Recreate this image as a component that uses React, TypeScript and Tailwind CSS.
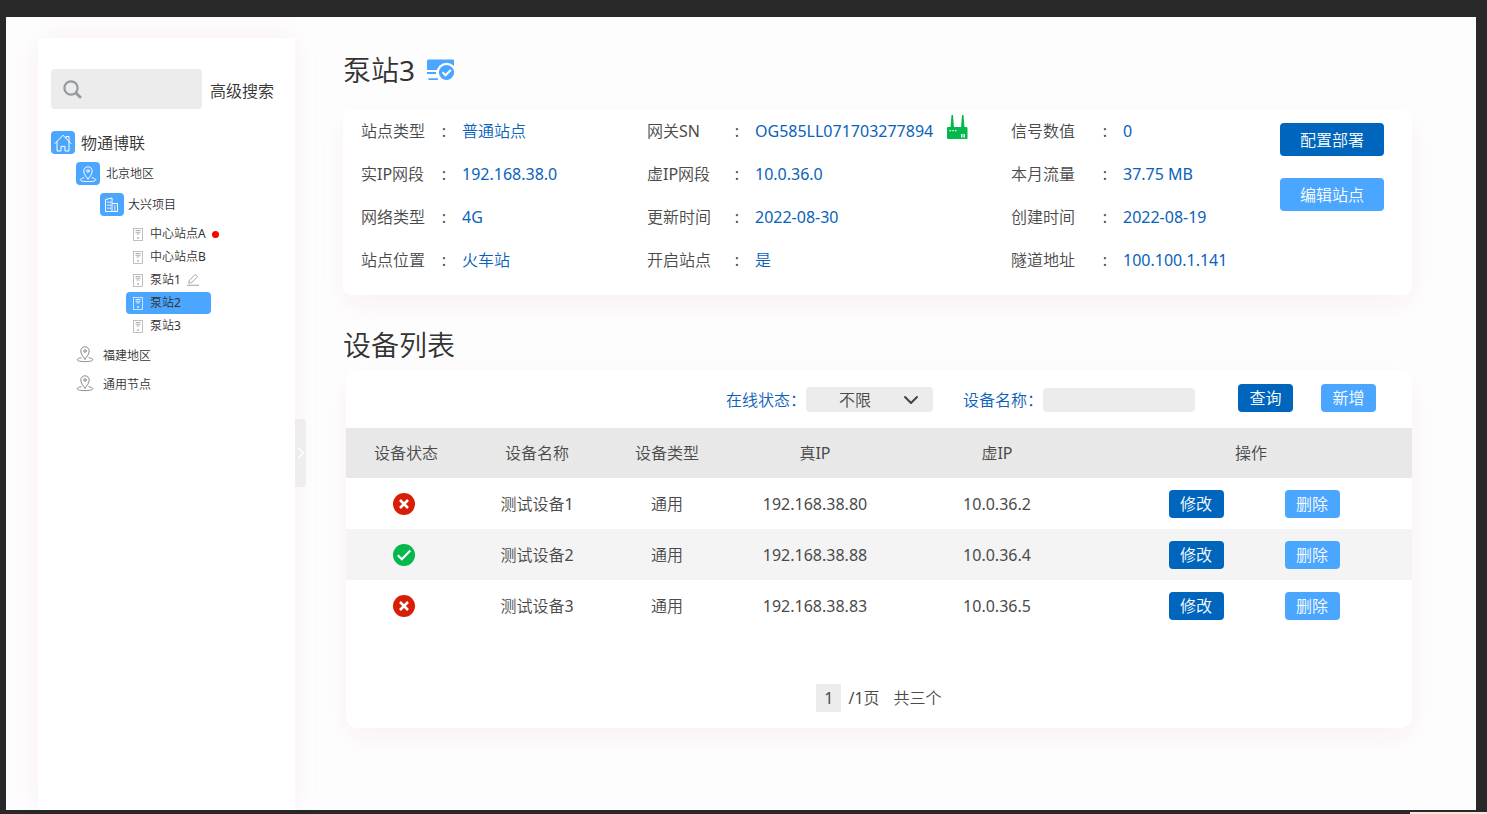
import React, { useState } from 'react';
import { ChevronDown, ChevronRight } from 'lucide-react';

interface Field {
  label: string;
  value: string;
  online?: boolean;
}

interface Device {
  id: number;
  name: string;
  type: string;
  realIp: string;
  virtualIp: string;
  online: boolean;
}

interface Station {
  name: string;
  alert?: boolean;
  editable?: boolean;
}

const siteFields: Field[][] = [
  [
    { label: '站点类型', value: '普通站点' },
    { label: '实IP网段', value: '192.168.38.0' },
    { label: '网络类型', value: '4G' },
    { label: '站点位置', value: '火车站' }
  ],
  [
    { label: '网关SN', value: 'OG585LL071703277894', online: true },
    { label: '虚IP网段', value: '10.0.36.0' },
    { label: '更新时间', value: '2022-08-30' },
    { label: '开启站点', value: '是' }
  ],
  [
    { label: '信号数值', value: '0' },
    { label: '本月流量', value: '37.75 MB' },
    { label: '创建时间', value: '2022-08-19' },
    { label: '隧道地址', value: '100.100.1.141' }
  ]
];

const labelWidths = ['w-[101px]', 'w-[108px]', 'w-[112px]'];

const devices: Device[] = [
  { id: 1, name: '测试设备1', type: '通用', realIp: '192.168.38.80', virtualIp: '10.0.36.2', online: false },
  { id: 2, name: '测试设备2', type: '通用', realIp: '192.168.38.88', virtualIp: '10.0.36.4', online: true },
  { id: 3, name: '测试设备3', type: '通用', realIp: '192.168.38.83', virtualIp: '10.0.36.5', online: false }
];

const stations: Station[] = [
  { name: '中心站点A', alert: true },
  { name: '中心站点B' },
  { name: '泵站1', editable: true },
  { name: '泵站2' },
  { name: '泵站3' }
];

const SearchIcon = () => (
  <svg width="19" height="19" viewBox="0 0 19 19" fill="none" stroke="#949a9f" strokeLinecap="round">
    <circle cx="8" cy="8" r="6.6" strokeWidth="2.2" />
    <path d="M13 13l4 4" strokeWidth="3" />
  </svg>
);

const HomeIcon = () => (
  <svg width="18" height="18" viewBox="0 0 18 18" fill="none" stroke="white" strokeWidth="1" strokeLinejoin="round" strokeLinecap="round">
    <path d="M1 9.5L9 1.2l8 8.3" />
    <path d="M3 8v9h4v-4.6h4V17h4V8" />
    <path d="M12 4.2V2.5h3v4.8" />
  </svg>
);

const PinIcon = ({ color }: { color: string }) => (
  <svg width="18" height="18" viewBox="0 0 18 18" fill="none" stroke={color} strokeWidth="1" strokeLinecap="round">
    <path d="M9 14C6.8 11.4 4.8 8.8 4.8 6a4.2 4.2 0 0 1 8.4 0c0 2.8-2 5.4-4.2 8z" />
    <circle cx="9" cy="6" r="1.3" />
    <path d="M5 12.8c-2 .3-3.8 1-3.8 1.9 0 1.3 3.5 1.9 7.8 1.9s7.8-.6 7.8-1.9c0-.9-1.8-1.6-3.8-1.9" />
  </svg>
);

const BuildingIcon = () => (
  <svg width="16" height="16" viewBox="0 0 16 16" fill="none" stroke="white" strokeWidth="1">
    <path d="M1.5 14.5V2.5l6.5-1.5v13.5zM8 6.5h5.5v8H8" />
    <path d="M4 4.5V6M6.2 4.5V6M4 7.5V9M6.2 7.5V9M4 10.5V12M6.2 10.5V12" strokeWidth="1.2" />
    <path d="M10.8 8.5v1M10.8 10.5v1M10.8 12.5v1" strokeWidth="1.5" />
  </svg>
);

const ServerIcon = ({ color }: { color: string }) => (
  <svg width="10" height="13" viewBox="0 0 10 13" fill="none" stroke={color}>
    <rect x="0.5" y="0.5" width="9" height="12" strokeWidth="0.8" />
    <path d="M2.5 2.5h5M2.5 4.3h5M3.5 6h3" strokeWidth="1" />
    <path d="M5 9v2" strokeWidth="1.4" />
  </svg>
);

const PencilIcon = () => (
  <svg width="12" height="12" viewBox="0 0 12 12" fill="none" stroke="#999" strokeWidth="0.9" strokeLinejoin="round">
    <path d="M1.8 9.2l.6-2.9L7.8 1a.9.9 0 0 1 1.3 0l1 1a.9.9 0 0 1 0 1.3L4.7 8.6zM0 11.3h12" />
  </svg>
);

const SiteBadgeIcon = () => (
  <svg width="28" height="22" viewBox="0 0 28 22" fill="none">
    <path d="M1.5 0.5H26a1 1 0 0 1 1 1V11H0V2a1.5 1.5 0 0 1 1.5-1.5z" fill="#4ba6ff" />
    <path d="M0 14h9M1.5 20.2h9.5" stroke="#4ba6ff" strokeWidth="1.8" />
    <circle cx="19.5" cy="13.5" r="9.8" fill="white" />
    <circle cx="19.5" cy="13.5" r="7.6" fill="#4ba6ff" />
    <path d="M15.5 13.3l3 3 5.3-5.3" stroke="white" strokeWidth="2" />
  </svg>
);

const RouterIcon = () => (
  <svg width="21" height="24" viewBox="0 0 21 24" fill="#04b84c">
    <path d="M4.5 0H6l1 12.5H3.5zM15 0h1.5l1 12.5H14z" />
    <rect x="0" y="12" width="20.5" height="12" rx="1" />
    <path d="M2.5 15H4v1.3H2.5zM5.3 15h1.5v1.3H5.3zM8 15h1.5v1.3H8zM14 19h1.5v3.5H14zM16.5 19H18v3.5h-1.5z" fill="white" />
  </svg>
);

const StatusIcon = ({ online }: { online: boolean }) => (
  <svg width="22" height="22" viewBox="0 0 22 22" fill="none" stroke="white" role="img" aria-label={online ? '在线' : '离线'}>
    <circle cx="11" cy="11" r="11" fill={online ? '#04b84c' : '#d81e06'} stroke="none" />
    {online ? (
      <path d="M4.8 11.2l4 4L17.3 6.6" strokeWidth="2.2" />
    ) : (
      <path d="M7 7l8 8M15 7l-8 8" strokeWidth="2.6" />
    )}
  </svg>
);

const Sidebar: React.FC = () => {
  const [selected, setSelected] = useState('泵站2');

  return (
    <aside className="w-[257px] shrink-0 bg-white pl-[13px] pt-[31px] shadow-[0_0_30px_rgba(150,20,60,0.06)]">
      <div className="flex items-center">
        <label className="flex h-10 w-[151px] items-center rounded bg-[#ececec] pl-3">
          <SearchIcon />
          <input type="search" aria-label="搜索" className="min-w-0 flex-1 bg-transparent px-2 text-base outline-none" />
        </label>
        <a href="#search" className="ml-2 pt-1 text-base text-[#333]">高级搜索</a>
      </div>

      <ul className="mt-[18px] text-xs text-[#333]">
        <li>
          <button className="flex h-[31px] items-center gap-[6px] text-base">
            <span className="flex h-[23px] w-6 items-center justify-center rounded bg-[#4ba6ff]"><HomeIcon /></span>
            物通博联
          </button>
          <ul className="pl-[25px]">
            <li className="pb-1">
              <button className="flex h-[31px] items-center gap-[6px]">
                <span className="flex h-[23px] w-6 items-center justify-center rounded bg-[#4ba6ff]"><PinIcon color="white" /></span>
                北京地区
              </button>
              <ul className="pl-6">
                <li>
                  <button className="flex h-[31px] items-center gap-1">
                    <span className="flex h-[23px] w-6 items-center justify-center rounded bg-[#4ba6ff]"><BuildingIcon /></span>
                    大兴项目
                  </button>
                  <ul className="flex flex-col gap-px pl-[26px] pt-[3px]">
                    {stations.map((station) => (
                      <li key={station.name} className="flex items-center">
                        <button
                          onClick={() => setSelected(station.name)}
                          className={`flex h-[22px] items-center gap-[7px] rounded pl-[7px] ${
                            selected === station.name ? 'w-[85px] bg-[#4ba6ff]' : ''
                          }`}
                        >
                          <ServerIcon color={selected === station.name ? '#e4f1ff' : '#b0b0b0'} />
                          {station.name}
                        </button>
                        {station.alert && <span className="ml-[6px] size-[7px] rounded-full bg-[#ff0000]" />}
                        {station.editable && (
                          <button aria-label="编辑" className="ml-[6px]"><PencilIcon /></button>
                        )}
                      </li>
                    ))}
                  </ul>
                </li>
              </ul>
            </li>
            {['福建地区', '通用节点'].map((region) => (
              <li key={region}>
                <button className="flex h-[29px] items-center gap-[9px]">
                  <span className="pb-1"><PinIcon color="#8a8a8a" /></span>
                  {region}
                </button>
              </li>
            ))}
          </ul>
        </li>
      </ul>
    </aside>
  );
};

const SiteInfo: React.FC = () => (
  <section>
    <h1 className="flex h-10 items-center gap-3 text-[28px] text-[#333]">
      泵站3
      <SiteBadgeIcon />
    </h1>
    <div className="mt-[19px] flex rounded-lg bg-white pb-[14px] pl-[18px] pr-7 shadow-[0_10px_30px_rgba(150,20,60,0.05)]">
      <div className="grid flex-1 grid-cols-[286fr_364fr_269fr]">
        {siteFields.map((column, i) => (
          <dl key={i}>
            {column.map((field) => (
              <div key={field.label} className="flex h-[43px] items-center">
                <dt className={`flex justify-between pr-4 text-[#4a4a4a] ${labelWidths[i]}`}>
                  <span>{field.label}</span>
                  <span>:</span>
                </dt>
                <dd className="flex items-center gap-[14px] text-[#0a62bb]">
                  {field.value}
                  {field.online && <span className="pb-2"><RouterIcon /></span>}
                </dd>
              </div>
            ))}
          </dl>
        ))}
      </div>
      <div className="flex w-[104px] flex-col gap-[22px] pt-[14px]">
        <button className="h-[33px] rounded bg-[#0065bd] text-white">配置部署</button>
        <button className="h-[33px] rounded bg-[#4ba6ff] text-white">编辑站点</button>
      </div>
    </div>
  </section>
);

const DeviceList: React.FC = () => (
  <section className="mt-[30px]">
    <h2 className="flex h-10 items-center text-[28px] text-[#333]">设备列表</h2>
    <div className="ml-[3px] mt-[5px] rounded-xl bg-white pb-4 pt-[14px] shadow-[0_10px_30px_rgba(150,20,60,0.05)]">
      <form className="flex items-end justify-end pb-4 pr-9" onSubmit={(e) => e.preventDefault()}>
        <label htmlFor="status" className="text-[#0a62bb]">在线状态：</label>
        <div className="relative">
          <select id="status" className="block h-[25px] w-[127px] appearance-none rounded bg-[#ececec] pl-[33px] text-[#4a4a4a] outline-none">
            <option>不限</option>
            <option>在线</option>
            <option>离线</option>
          </select>
          <ChevronDown className="pointer-events-none absolute right-[10px] top-[1px] text-[#444]" size={24} />
        </div>
        <label htmlFor="device-name" className="ml-[30px] text-[#0a62bb]">设备名称：</label>
        <input id="device-name" type="text" className="h-6 w-[152px] rounded bg-[#ececec] px-2 text-[#4a4a4a] outline-none" />
        <button type="submit" className="ml-[43px] h-7 w-[55px] rounded bg-[#0065bd] text-white">查询</button>
        <button type="button" className="ml-7 h-7 w-[55px] rounded bg-[#4ba6ff] text-white">新增</button>
      </form>

      <table className="w-full table-fixed text-center text-[#4a4a4a]">
        <colgroup>
          <col className="w-[120px]" />
          <col className="w-[142px]" />
          <col className="w-[118px]" />
          <col className="w-[178px]" />
          <col className="w-[186px]" />
          <col className="w-[322px]" />
        </colgroup>
        <thead>
          <tr className="h-[50px] bg-[#e8e8e8]">
            <th className="font-normal">设备状态</th>
            <th className="font-normal">设备名称</th>
            <th className="font-normal">设备类型</th>
            <th className="font-normal">真IP</th>
            <th className="font-normal">虚IP</th>
            <th className="font-normal">操作</th>
          </tr>
        </thead>
        <tbody>
          {devices.map((device) => (
            <tr key={device.id} className="h-[51px] even:bg-[#f4f4f4]">
              <td>
                <div className="flex justify-center pr-1"><StatusIcon online={device.online} /></div>
              </td>
              <td>{device.name}</td>
              <td>{device.type}</td>
              <td>{device.realIp}</td>
              <td>{device.virtualIp}</td>
              <td>
                <div className="flex justify-center gap-[61px] pl-[6px]">
                  <button className="h-7 w-[55px] rounded bg-[#0065bd] text-white">修改</button>
                  <button className="h-7 w-[55px] rounded bg-[#4ba6ff] text-white">删除</button>
                </div>
              </td>
            </tr>
          ))}
        </tbody>
      </table>

      <nav aria-label="分页" className="mt-[53px] flex items-center justify-center text-[#4a4a4a]">
        <button className="h-7 w-[25px] bg-[#ececec]">1</button>
        <span className="ml-[7px]">/1页</span>
        <span className="ml-[14px]">共三个</span>
      </nav>
    </div>
  </section>
);

const App: React.FC = () => {
  return (
    <div className="flex min-h-screen flex-col bg-[#282828] pt-[17px] font-['Noto_Sans','Noto_Sans_CJK_SC_DemiLight','Noto_Sans_CJK_SC',sans-serif] text-base font-normal">
      <div className="ml-[6px] mr-[11px] flex flex-1 overflow-hidden bg-[#fefdfe] pl-8 pr-16 pt-[21px]">
        <Sidebar />
        <button aria-label="展开" className="mt-[381px] flex h-[68px] w-[11px] shrink-0 items-center justify-center rounded-r bg-[#f0edef] text-white">
          <ChevronRight className="shrink-0" size={20} strokeWidth={1.5} />
        </button>
        <main className="ml-[37px] min-w-0 flex-1 pb-10 pt-3">
          <SiteInfo />
          <DeviceList />
        </main>
      </div>
      <div className="flex h-1 items-end justify-end">
        <div className="h-[2px] w-[77px] bg-[#fce4d8]" />
      </div>
    </div>
  );
};

export default App;
